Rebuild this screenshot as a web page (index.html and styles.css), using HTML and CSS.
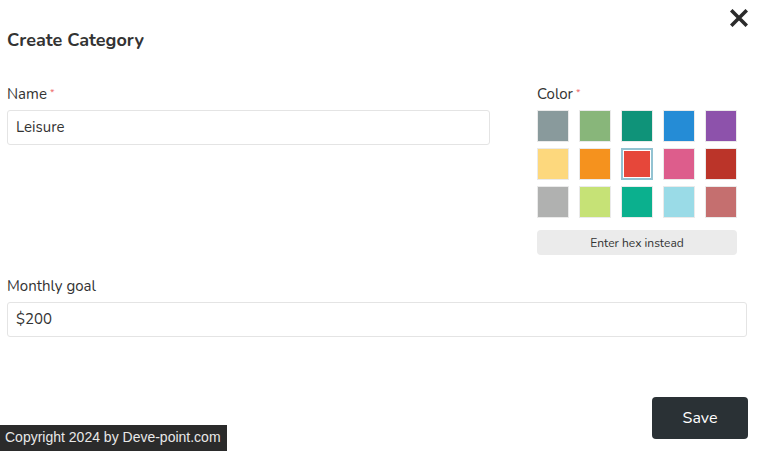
FILE: index.html
```html
<!DOCTYPE html>
<html>
<head>
<meta charset="utf-8">
<link rel="stylesheet" href="styles.css">
</head>
<body>
<div class="modal">
  <button class="close" aria-label="Close">
    <svg width="18" height="18" viewBox="0 0 18 18"><path d="M2.5 2.5 L15.5 15.5 M15.5 2.5 L2.5 15.5" stroke="#2b2b2b" stroke-width="3.6" stroke-linecap="square"/></svg>
  </button>
  <h1 class="title">Create Category</h1>
  <div class="row">
    <div class="field name-field">
      <label class="label">Name<span class="req">*</span></label>
      <div class="input">Leisure</div>
    </div>
    <div class="field color-field">
      <label class="label">Color<span class="req">*</span></label>
      <div class="swatches">
        <span class="sw" style="background:#899a9c"></span>
        <span class="sw" style="background:#88b67a"></span>
        <span class="sw" style="background:#0f9379"></span>
        <span class="sw" style="background:#258cd6"></span>
        <span class="sw" style="background:#8d52ab"></span>
        <span class="sw" style="background:#fdd87d"></span>
        <span class="sw" style="background:#f5921e"></span>
        <span class="sw selected" style="background:#e6473a"></span>
        <span class="sw" style="background:#dd5d8c"></span>
        <span class="sw" style="background:#bb3429"></span>
        <span class="sw" style="background:#b0b1b0"></span>
        <span class="sw" style="background:#c6e276"></span>
        <span class="sw" style="background:#0bb08e"></span>
        <span class="sw" style="background:#9adbe7"></span>
        <span class="sw" style="background:#c56f6f"></span>
      </div>
      <button class="hex">Enter hex instead</button>
    </div>
  </div>
  <div class="field goal-field">
    <label class="label">Monthly goal</label>
    <div class="input">$200</div>
  </div>
  <div class="actions">
    <button class="save">Save</button>
  </div>
</div>
<div class="copyright">Copyright 2024 by Deve-point.com</div>
</body>
</html>
```

FILE: styles.css
```css
* { box-sizing: border-box; }
html, body { margin: 0; padding: 0; background: #fff; }
body {
  font-family: "Nunito", "Noto Sans", "Open Sans", sans-serif;
  color: #333;
  width: 757px;
  height: 451px;
  overflow: hidden;
  position: relative;
}
.modal {
  position: relative;
  padding: 26px 10px 0 7px;
}
.close {
  position: absolute;
  top: 9px;
  right: 9px;
  border: 0;
  background: none;
  padding: 0;
  width: 18px;
  height: 18px;
  display: flex;
}
.title {
  margin: 0;
  font-size: 18px;
  font-weight: 700;
  line-height: 28px;
  color: #333;
}
.row {
  display: flex;
  gap: 47px;
  margin-top: 29px;
}
.name-field { width: 483px; }
.color-field { width: 210px; }
.label {
  display: block;
  font-size: 15px;
  line-height: 22px;
  margin-bottom: 5px;
  color: #333;
}
.req {
  color: #e66;
  font-size: 10px;
  vertical-align: top;
  margin-left: 3px;
  position: relative;
  top: -1px;
}
.input {
  height: 35px;
  border: 1px solid #e4e4e4;
  border-radius: 3px;
  padding: 0 8px;
  font-size: 15px;
  line-height: 33px;
  color: #333;
}
.swatches {
  display: grid;
  grid-template-columns: repeat(5, 32px);
  gap: 6px 10px;
  margin-top: 0;
}
.sw {
  display: block;
  width: 32px;
  height: 32px;
  border: 1px solid #eaeaea;
}
.sw.selected {
  border: 2px solid #93c3d2;
  box-shadow: inset 0 0 0 1px #fff;
}
.hex {
  display: block;
  width: 200px;
  height: 25px;
  margin-top: 12px;
  border: 0;
  border-radius: 4px;
  background: #ebebeb;
  font-family: inherit;
  font-size: 12px;
  color: #333;
  padding: 0;
}
.goal-field { margin-top: 20px; }
.actions {
  display: flex;
  justify-content: flex-end;
  margin-top: 60px;
}
.save {
  width: 96px;
  height: 42px;
  border: 0;
  border-radius: 4px;
  background: #2a3135;
  color: #fff;
  font-family: inherit;
  font-size: 16px;
  margin-right: -1px;
}
.copyright {
  position: absolute;
  left: 0;
  bottom: 0;
  width: 227px;
  height: 26px;
  background: #2b2b2b;
  color: #e8e8e8;
  font-family: "Liberation Sans", Arial, sans-serif;
  font-size: 14px;
  line-height: 24px;
  padding-left: 5px;
}
```
